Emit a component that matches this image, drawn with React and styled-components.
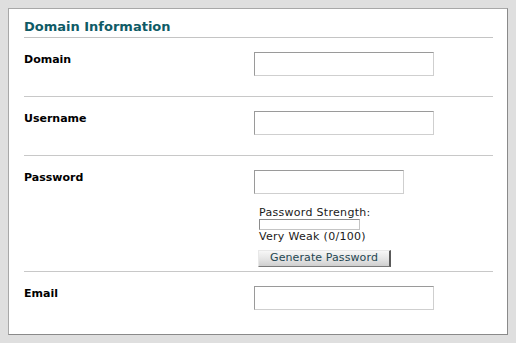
import React from "react";
import styled, { createGlobalStyle } from "styled-components";

const Global = createGlobalStyle`
  html, body { margin: 0; padding: 0; }
  body {
    background: #dfdfdf;
    font-family: "DejaVu Sans", Verdana, sans-serif;
    font-size: 11px;
    color: #111;
  }
`;

const Page = styled.div`
  padding: 8px;
`;

const Panel = styled.div`
  box-sizing: border-box;
  width: 500px;
  background: #fff;
  border: 1px solid #a8a8a8;
  border-right-color: #8a8a8a;
  border-bottom-color: #8a8a8a;
  padding: 0 14px 4px 15px;
`;

const Heading = styled.h2`
  margin: 0;
  padding: 10px 0 2px;
  font-size: 13px;
  line-height: 16px;
  font-weight: bold;
  color: #0f5b66;
  border-bottom: 1px solid #c4c4c4;
`;

const Row = styled.div`
  display: grid;
  grid-template-columns: 230px 1fr;
  padding: 14px 0 4px;
  border-bottom: ${(p) => (p.$last ? "none" : "1px solid #c8c8c8")};
`;

const Label = styled.div`
  font-weight: bold;
  font-size: 11px;
  line-height: 13px;
  padding-top: 1px;
  color: #000;
`;

const Field = styled.div`
  min-height: 40px;
  display: flex;
  flex-direction: column;
  align-items: flex-start;
`;

const Input = styled.input`
  box-sizing: border-box;
  width: ${(p) => p.$w}px;
  height: 24px;
  margin: 0;
  padding: 2px 4px;
  background: #fff;
  border: 1px solid #9a9a9a;
  border-right-color: #cfcfcf;
  border-bottom-color: #cfcfcf;
  font-family: "DejaVu Sans", Verdana, sans-serif;
  font-size: 11px;
  outline: none;
`;

const Strength = styled.div`
  margin: 12px 0 0 5px;
  display: flex;
  flex-direction: column;
  align-items: flex-start;
`;

const Text = styled.div`
  font-size: 11px;
  line-height: 13px;
  letter-spacing: 0.3px;
  color: #1a1a1a;
`;

const Meter = styled.div`
  box-sizing: border-box;
  width: 101px;
  height: 11px;
  background: #fff;
  border: 1px solid #8c8c8c;
  border-right-color: #c4c4c4;
  border-bottom-color: #c4c4c4;
`;

const Button = styled.button`
  box-sizing: border-box;
  margin: 7px 0 0 -1px;
  width: 133px;
  height: 17px;
  padding: 0 0 1px;
  font-family: "DejaVu Sans", Verdana, sans-serif;
  font-size: 11px;
  line-height: 14px;
  letter-spacing: 0.1px;
  color: #1f4752;
  background: linear-gradient(#f7f7f7, #e2e2e2 60%, #cfcfcf);
  border: 1px solid #e8e8e8;
  border-right: 2px solid #5a5a5a;
  border-bottom: 1px solid #7a7a7a;
  cursor: pointer;
`;

export default function App() {
  return (
    <>
      <Global />
      <Page>
        <Panel>
          <Heading>Domain Information</Heading>
          <Row>
            <Label>Domain</Label>
            <Field>
              <Input $w={180} />
            </Field>
          </Row>
          <Row>
            <Label>Username</Label>
            <Field>
              <Input $w={180} />
            </Field>
          </Row>
          <Row>
            <Label>Password</Label>
            <Field>
              <Input $w={150} type="password" />
              <Strength>
                <Text>Password Strength:</Text>
                <Meter />
                <Text>Very Weak (0/100)</Text>
                <Button type="button">Generate Password</Button>
              </Strength>
            </Field>
          </Row>
          <Row $last>
            <Label>Email</Label>
            <Field>
              <Input $w={180} />
            </Field>
          </Row>
        </Panel>
      </Page>
    </>
  );
}
